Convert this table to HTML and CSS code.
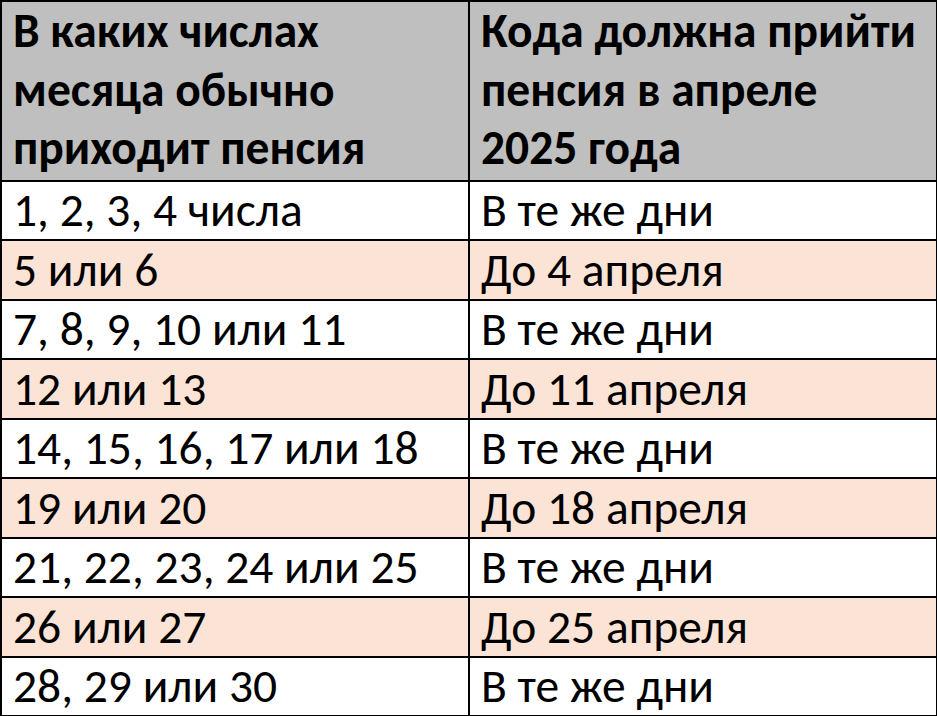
FILE: index.html
```html
<!DOCTYPE html>
<html lang="ru">
<head>
<meta charset="utf-8">
<link rel="stylesheet" href="styles.css">
</head>
<body>
<table class="pension">
  <colgroup><col class="c1"><col class="c2"></colgroup>
  <thead>
    <tr class="head">
      <th>В каких числах<br>месяца обычно<br>приходит пенсия</th>
      <th>Кода должна прийти<br>пенсия в апреле<br>2025 года</th>
    </tr>
  </thead>
  <tbody>
    <tr><td>1, 2, 3, 4 числа</td><td>В те же дни</td></tr>
    <tr class="alt"><td>5 или 6</td><td>До 4 апреля</td></tr>
    <tr><td>7, 8, 9, 10 или 11</td><td>В те же дни</td></tr>
    <tr class="alt"><td>12 или 13</td><td>До 11 апреля</td></tr>
    <tr><td>14, 15, 16, 17 или 18</td><td>В те же дни</td></tr>
    <tr class="alt"><td>19 или 20</td><td>До 18 апреля</td></tr>
    <tr><td>21, 22, 23, 24 или 25</td><td>В те же дни</td></tr>
    <tr class="alt"><td>26 или 27</td><td>До 25 апреля</td></tr>
    <tr><td>28, 29 или 30</td><td>В те же дни</td></tr>
  </tbody>
</table>
</body>
</html>
```
FILE: styles.css
```css
html, body {
  margin: 0;
  padding: 0;
  background: #fff;
}
.pension {
  border-collapse: collapse;
  table-layout: fixed;
  width: 936px;
  font-family: Calibri, Carlito, "Open Sans", "Noto Sans", sans-serif;
  color: #000;
}
.pension .c1 { width: 468px; }
.pension .c2 { width: 468px; }
.pension th, .pension td {
  border: 2px solid #000;
  text-align: left;
  vertical-align: middle;
  padding: 0 4px 0 11px;
  box-sizing: border-box;
  white-space: nowrap;
}
.pension th {
  background: #bfbfbf;
  font-weight: 700;
  font-size: 47.5px;
  line-height: 58.5px;
  height: 177px;
  padding-bottom: 2px;
}
.pension td {
  font-size: 47.5px;
  height: 59.5px;
  line-height: 54px;
}
.pension tr.alt td {
  background: #fbe4d5;
}
```
